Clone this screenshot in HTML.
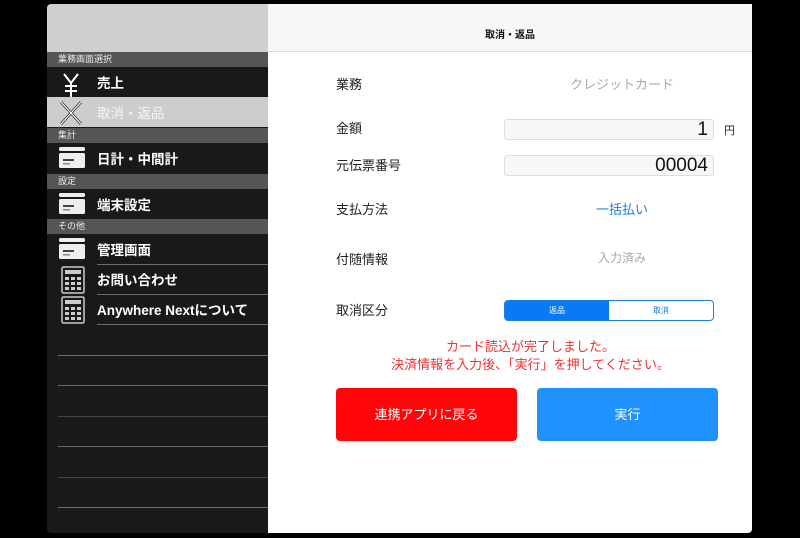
<!DOCTYPE html>
<html><head><meta charset="utf-8"><style>
*{margin:0;padding:0;box-sizing:border-box}
body{width:800px;height:538px;background:#000;position:relative;overflow:hidden;font-family:"Liberation Sans","Noto Sans CJK JP",sans-serif}
.a{position:absolute}
#side{left:47px;top:4px;width:221px;height:529px;background:#19191b;border-radius:4px 0 0 4px;overflow:hidden}
.sh{position:absolute;left:0;width:221px;height:15px;background:#555;color:#eee;font-size:9px;line-height:15px;padding-left:11px}
.row{position:absolute;left:0;width:221px;height:30px;color:#fff;font-size:13.5px;font-weight:bold;line-height:33px;padding-left:50px}
.ln{position:absolute;left:11px;width:210px;height:1px;background:#6a6a6a}
#main{left:268px;top:4px;width:484px;height:529px;background:#fff;border-radius:0 4px 4px 0}
.lb{position:absolute;left:68px;font-size:13px;color:#222}
.box{position:absolute;left:236px;width:210px;height:21px;background:#f7f7f7;border:1px solid #ddd;border-radius:3px;text-align:right;padding-right:5px;color:#111}
</style></head><body>
<div id="side" class="a">
<div class="a" style="left:0;top:0;width:221px;height:48px;background:#cfcfcf"></div>
<div class="sh" style="top:48px">業務画面選択</div>
<div class="row" style="top:63px">売上</div>
<svg class="a" style="left:12px;top:68px" width="24" height="26" viewBox="0 0 24 26" fill="none" stroke="#fff" stroke-width="2"><path d="M5 2l7 9 7-9M12 11v14M6 14h12M6 19h12"/></svg>
<div class="row" style="top:93px;background:#cdcdcd;color:#f4f4f4;font-weight:normal">取消・返品</div>
<svg class="a" style="left:12px;top:96px" width="24" height="26" viewBox="0 0 24 26" fill="none" stroke="#222" stroke-width="2.6"><path d="M2 2l20 22M22 2L2 24"/></svg>
<svg class="a" style="left:12px;top:96px" width="24" height="26" viewBox="0 0 24 26" fill="none" stroke="#fff" stroke-width="1.2"><path d="M2 2l20 22M22 2L2 24"/></svg>
<div class="sh" style="top:124px">集計</div>
<div class="row" style="top:139px">日計・中間計</div>
<div class="sh" style="top:170px">設定</div>
<div class="row" style="top:185px">端末設定</div>
<div class="sh" style="top:215px">その他</div>
<div class="row" style="top:230px">管理画面</div>
<div class="row" style="top:260px">お問い合わせ</div>
<div class="row" style="top:290px">Anywhere Nextについて</div>
<svg class="a" style="left:12px;top:143px" width="26" height="22"><rect x="0" y="0" width="26" height="4" rx="1.5" fill="#eee"/><rect x="0" y="6" width="26" height="15" rx="1.5" fill="#eee"/><rect x="4" y="12" width="11" height="2" fill="#444"/><rect x="4" y="16" width="7" height="1.5" fill="#888"/></svg>
<svg class="a" style="left:12px;top:189px" width="26" height="22"><rect x="0" y="0" width="26" height="4" rx="1.5" fill="#eee"/><rect x="0" y="6" width="26" height="15" rx="1.5" fill="#eee"/><rect x="4" y="12" width="11" height="2" fill="#444"/><rect x="4" y="16" width="7" height="1.5" fill="#888"/></svg>
<svg class="a" style="left:12px;top:234px" width="26" height="22"><rect x="0" y="0" width="26" height="4" rx="1.5" fill="#eee"/><rect x="0" y="6" width="26" height="15" rx="1.5" fill="#eee"/><rect x="4" y="12" width="11" height="2" fill="#444"/><rect x="4" y="16" width="7" height="1.5" fill="#888"/></svg>
<svg class="a" style="left:14px;top:262px" width="24" height="28" viewBox="0 0 24 28"><rect x="1" y="1" width="22" height="26" rx="1.5" fill="none" stroke="#ccc" stroke-width="1.5"/><rect x="4" y="4" width="16" height="4" fill="#ccc"/><g fill="#ccc"><rect x="4" y="11" width="4" height="3"/><rect x="10" y="11" width="4" height="3"/><rect x="16" y="11" width="4" height="3"/><rect x="4" y="16" width="4" height="3"/><rect x="10" y="16" width="4" height="3"/><rect x="16" y="16" width="4" height="3"/><rect x="4" y="21" width="4" height="3"/><rect x="10" y="21" width="4" height="3"/><rect x="16" y="21" width="4" height="3"/></g></svg>
<svg class="a" style="left:14px;top:292px" width="24" height="28" viewBox="0 0 24 28"><rect x="1" y="1" width="22" height="26" rx="1.5" fill="none" stroke="#ccc" stroke-width="1.5"/><rect x="4" y="4" width="16" height="4" fill="#ccc"/><g fill="#ccc"><rect x="4" y="11" width="4" height="3"/><rect x="10" y="11" width="4" height="3"/><rect x="16" y="11" width="4" height="3"/><rect x="4" y="16" width="4" height="3"/><rect x="10" y="16" width="4" height="3"/><rect x="16" y="16" width="4" height="3"/><rect x="4" y="21" width="4" height="3"/><rect x="10" y="21" width="4" height="3"/><rect x="16" y="21" width="4" height="3"/></g></svg>
<div class="ln" style="top:260px;left:50px;width:171px"></div>
<div class="ln" style="top:290px;left:50px;width:171px"></div>
<div class="ln" style="top:320px;left:50px;width:171px"></div>
<div class="ln" style="top:351px"></div>
<div class="ln" style="top:381px"></div>
<div class="ln" style="top:412px;background:#444"></div>
<div class="ln" style="top:442px"></div>
<div class="ln" style="top:473px;background:#444"></div>
<div class="ln" style="top:503px"></div>
</div>
<div id="main" class="a">
<div class="a" style="left:0;top:0;width:484px;height:48px;background:#f8f8f8;border-bottom:1px solid #ddd;text-align:center;line-height:64px;font-size:10px;font-weight:bold;color:#111">取消・返品</div>
<div class="lb" style="top:70px">業務</div>
<div class="a" style="left:236px;width:236px;top:70px;text-align:center;font-size:13px;color:#aaa">クレジットカード</div>
<div class="lb" style="top:114px">金額</div>
<div class="box" style="top:115px;font-size:19px;line-height:19px">1</div>
<div class="a" style="left:456px;top:118px;font-size:11px;color:#222">円</div>
<div class="lb" style="top:151px">元伝票番号</div>
<div class="box" style="top:151px;font-size:19px;line-height:19px">00004</div>
<div class="lb" style="top:195px">支払方法</div>
<div class="a" style="left:236px;width:236px;top:195px;text-align:center;font-size:13px;color:#1a7ce6">一括払い</div>
<div class="lb" style="top:245px">付随情報</div>
<div class="a" style="left:236px;width:236px;top:245px;text-align:center;font-size:12px;color:#aaa">入力済み</div>
<div class="lb" style="top:296px">取消区分</div>
<div class="a" style="left:236px;top:296px;width:210px;height:21px;border:1px solid #1a7ce6;border-radius:4px;overflow:hidden;font-size:8px;display:flex">
<div style="width:104px;background:#0a7af4;color:#fff;text-align:center;line-height:19px">返品</div>
<div style="flex:1;color:#1a7ce6;text-align:center;line-height:19px">取消</div></div>
<div class="a" style="left:48px;width:429px;top:334px;text-align:center;font-size:13px;line-height:18px;color:#f03030">カード読込が完了しました。<br>決済情報を入力後、「実行」を押してください。</div>
<div class="a" style="left:68px;top:384px;width:181px;height:53px;background:#ff0509;border-radius:4px;color:#fff;font-size:13px;text-align:center;line-height:53px">連携アプリに戻る</div>
<div class="a" style="left:269px;top:384px;width:181px;height:53px;background:#1f92ff;border-radius:4px;color:#fff;font-size:13px;text-align:center;line-height:53px">実行</div>
</div>
</body></html>
